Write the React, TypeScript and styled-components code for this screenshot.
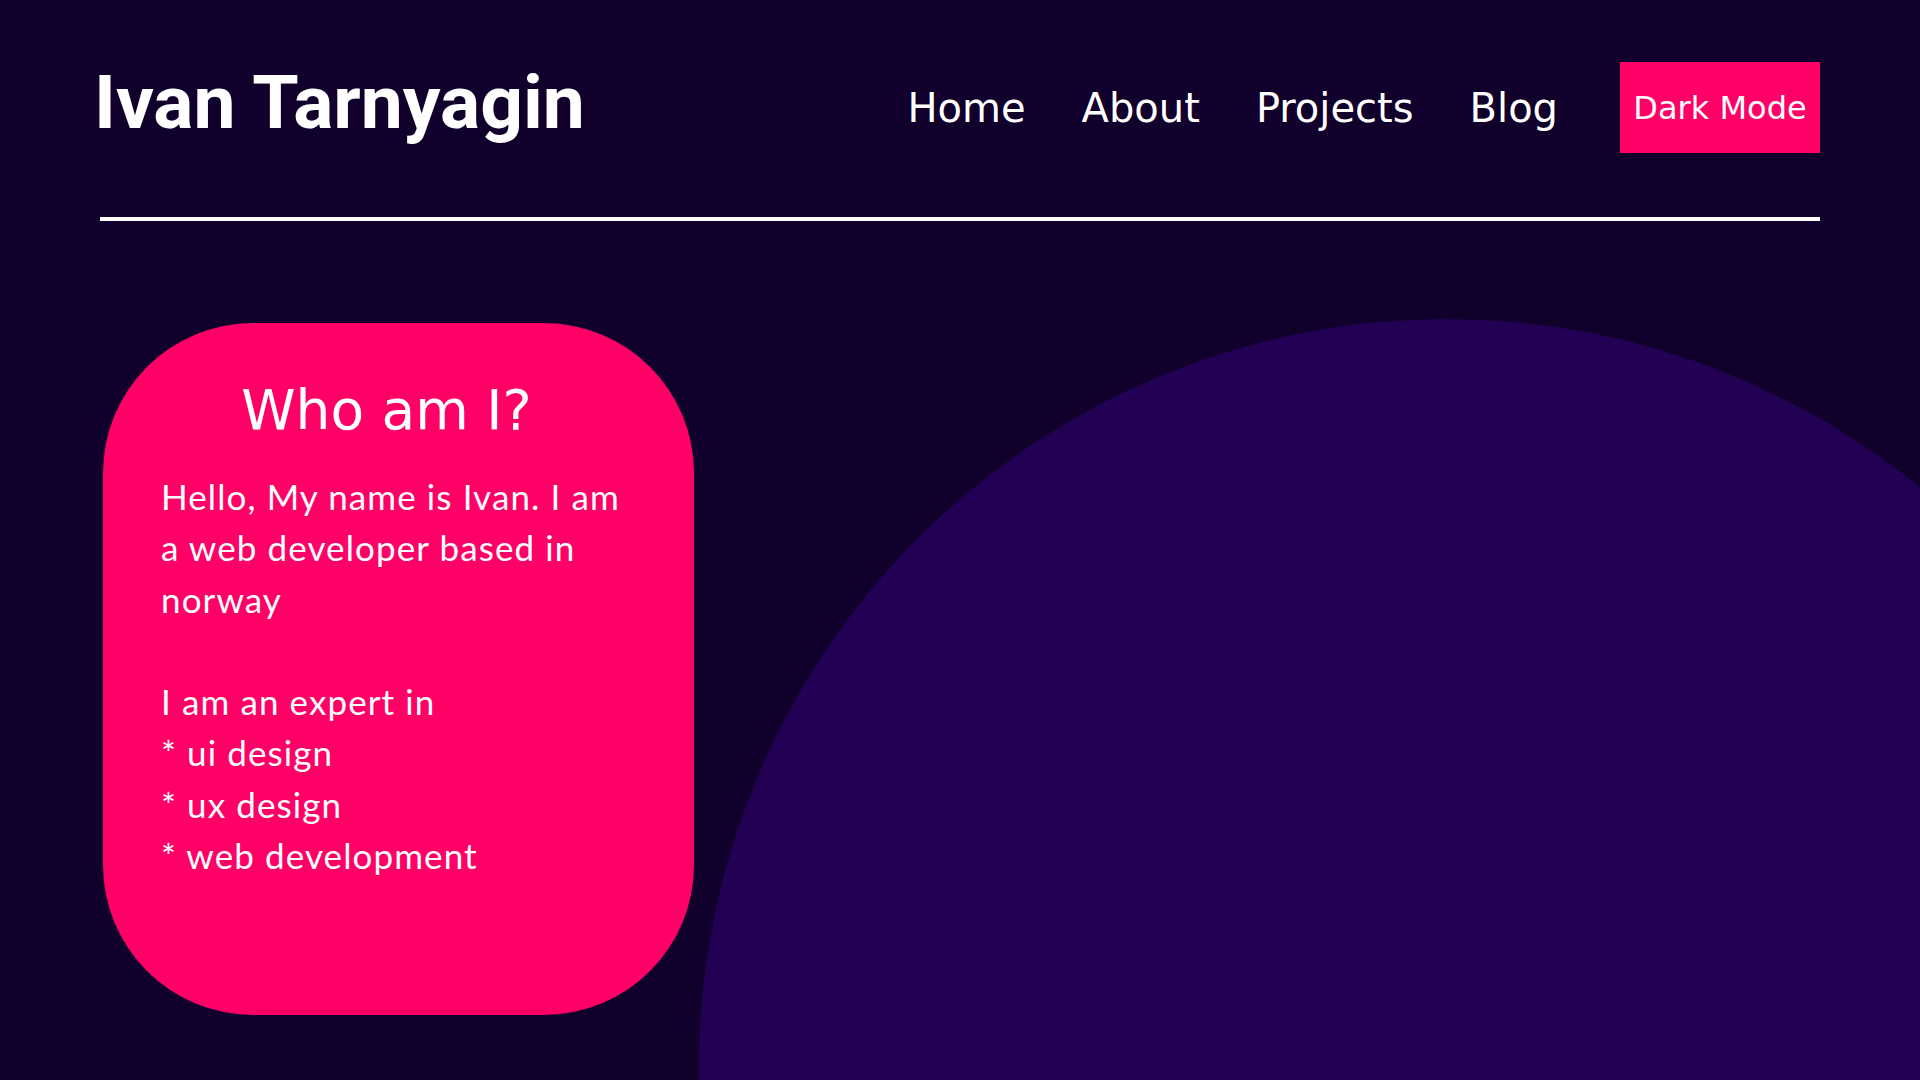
import styled, { createGlobalStyle } from 'styled-components';

const GlobalStyle = createGlobalStyle`
  html,
  body {
    margin: 0;
    padding: 0;
    background-color: #10002b;
    overflow: hidden;
  }
`;

const Page = styled.div`
  width: 1920px;
  height: 1080px;
  overflow: hidden;
  background-color: #10002b;
  color: #ffffff;
`;

const Header = styled.header`
  display: flex;
  justify-content: space-between;
  align-items: flex-start;
  padding: 62px 100px 0 100px;
`;

const Logo = styled.h1`
  margin: 3px 0 0 -6px;
  font-family: Roboto, 'Liberation Sans', sans-serif;
  font-size: 75px;
  font-weight: 700;
  line-height: 1;
  color: #ffffff;
`;

const Nav = styled.nav`
  display: flex;
  align-items: center;
  gap: 56px;
  height: 91px;
`;

const NavLink = styled.a`
  font-family: 'DejaVu Sans', Verdana, sans-serif;
  font-size: 40px;
  color: #ffffff;
  text-decoration: none;
  cursor: pointer;
`;

const ModeButton = styled.button`
  display: flex;
  align-items: center;
  justify-content: center;
  width: 200px;
  height: 91px;
  margin-left: 6px;
  padding: 0;
  border: none;
  background-color: #ff0066;
  color: #ffffff;
  font-family: 'DejaVu Sans', Verdana, sans-serif;
  font-size: 32px;
  cursor: pointer;
`;

const Divider = styled.div`
  height: 4px;
  margin: 64px 100px 0 100px;
  background-color: #ffffff;
`;

const Main = styled.main`
  display: flex;
  align-items: flex-start;
  gap: 5px;
  padding: 98px 0 0 103px;
`;

const AboutCard = styled.section`
  flex-shrink: 0;
  box-sizing: border-box;
  width: 591px;
  height: 692px;
  margin-top: 4px;
  padding: 60px 40px 0 58px;
  border-radius: 150px;
  background-color: #ff0066;
`;

const CardTitle = styled.h2`
  margin: 0;
  padding-right: 42px;
  font-family: 'DejaVu Sans', Verdana, sans-serif;
  font-size: 55px;
  font-weight: 400;
  line-height: 1;
  text-align: center;
  color: #ffffff;
`;

const CardText = styled.p`
  margin: 33px 0 0 0;
  font-family: Lato, 'Open Sans', sans-serif;
  font-size: 35px;
  letter-spacing: 1.1px;
  line-height: 51.3px;
  white-space: pre-line;
  color: #ffffff;
`;

const Blob = styled.div`
  flex-shrink: 0;
  width: 1496px;
  height: 1496px;
  border-radius: 50%;
  background-color: #220054;
`;

const navItems = ['Home', 'About', 'Projects', 'Blog'];

const aboutText = `Hello, My name is Ivan. I am
a web developer based in
norway

I am an expert in
* ui design
* ux design
* web development`;

export default function App() {
  return (
    <>
      <GlobalStyle />
      <Page>
        <Header>
          <Logo>Ivan Tarnyagin</Logo>
          <Nav>
            {navItems.map((item) => (
              <NavLink key={item}>{item}</NavLink>
            ))}
            <ModeButton>Dark Mode</ModeButton>
          </Nav>
        </Header>
        <Divider />
        <Main>
          <AboutCard>
            <CardTitle>Who am I?</CardTitle>
            <CardText>{aboutText}</CardText>
          </AboutCard>
          <Blob />
        </Main>
      </Page>
    </>
  );
}
